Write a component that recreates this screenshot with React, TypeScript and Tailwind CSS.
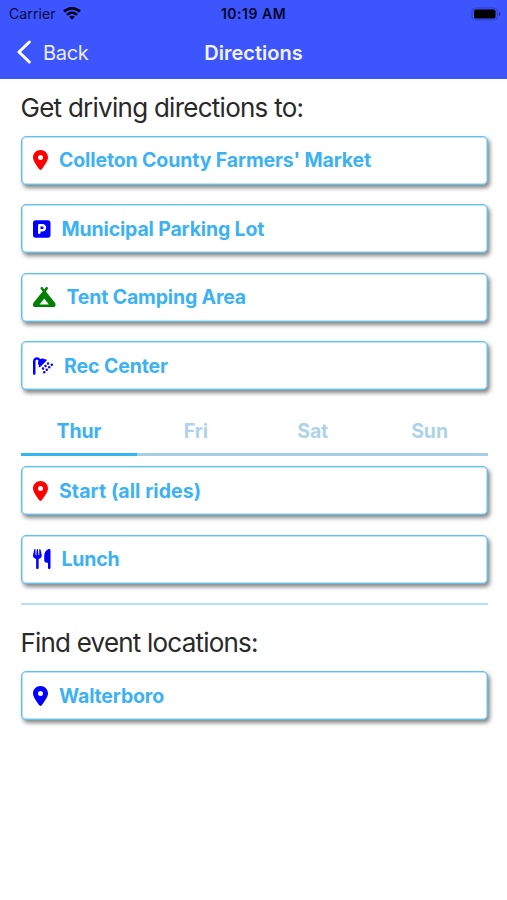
import type { ReactNode } from "react";
import {
  FaLocationDot,
  FaSquareParking,
  FaCampground,
  FaShower,
  FaUtensils,
} from "react-icons/fa6";

function Card({ icon, label, spacing }: { icon: ReactNode; label: string; spacing: string }) {
  return (
    <button className="flex h-[49px] w-full items-center gap-[11.5px] rounded-[5px] border border-[#64bfe9] bg-white pl-[11px] text-left text-[19.5px] font-bold text-[#3cb2f3] shadow-[inset_0_0_0_0.6px_#7fcdf0,2px_3px_4px_rgba(0,0,0,0.48)]">
      <span className="flex">{icon}</span>
      <span className={`pt-[1.5px] whitespace-nowrap ${spacing}`}>{label}</span>
    </button>
  );
}

function StatusBar() {
  return (
    <div className="grid h-[27px] grid-cols-3 items-center text-[14px] text-[#080b3c]">
      <div className="flex items-center gap-[7px] pl-[9px]">
        <span className="tracking-[0.1px]">Carrier</span>
        <svg width="18" height="13" viewBox="0 0 18 13" fill="none" stroke="#00001c" strokeWidth="2.6">
          <path d="M1 4.7C5.5.2 12.5.2 17 4.7" />
          <path d="M4 7.9c2.9-2.7 7.1-2.7 10 0" />
          <path d="M9 12.6 6.2 9.9c1.6-1.4 4-1.4 5.6 0Z" fill="#00001c" stroke="none" />
        </svg>
      </div>
      <span className="text-center font-semibold tracking-[0.5px] whitespace-nowrap text-[#050726]">10:19 AM</span>
      <div className="flex items-center justify-end pr-[6px]">
        <svg width="30" height="14" viewBox="0 0 30 14">
          <rect x="1" y="1" width="25.5" height="12" rx="3.5" fill="none" stroke="#2f3cc4" />
          <rect x="3" y="2.5" width="21.5" height="9" rx="1.8" fill="#000" />
          <path d="M28 5v4c2-.6 2-3.4 0-4Z" fill="#262f9c" />
        </svg>
      </div>
    </div>
  );
}

const days = ["Thur", "Fri", "Sat", "Sun"];

export default function App() {
  return (
    <div className="h-[900px] w-[507px] overflow-hidden bg-white font-['Inter','Liberation_Sans',sans-serif]">
      <header className="h-[79px] bg-[#3c55fd]">
        <StatusBar />
        <div className="grid h-[50px] grid-cols-3 items-center">
          <button className="flex items-center gap-[11px] pl-[16px] text-[20px] text-[#e9edff]">
            <svg width="16" height="24" viewBox="0 0 16 24" fill="none" stroke="#fff" strokeWidth="3" strokeLinecap="round" strokeLinejoin="round">
              <path d="M13.3 2 3 12l10.3 10" />
            </svg>
            <span className="pt-[1px] tracking-[-0.3px]">Back</span>
          </button>
          <h1 className="pt-[1px] text-center text-[20px] font-semibold text-[#f1f3ff]">Directions</h1>
        </div>
      </header>
      <main className="pr-[19px] pl-[20.5px]">
        <h2 className="flex h-[56.5px] items-center text-[26px] tracking-[-0.74px] whitespace-nowrap text-[#292929]">
          Get driving directions to:
        </h2>
        <div className="flex flex-col gap-[19.5px]">
          <Card icon={<FaLocationDot className="h-[20px] w-[15px] overflow-visible" color="#ff0000" />} label="Colleton County Farmers' Market" spacing="tracking-[-0.13px]" />
          <Card icon={<FaSquareParking className="h-[20px] w-[17.5px] overflow-visible" color="#0000ff" />} label="Municipal Parking Lot" spacing="tracking-[-0.15px]" />
          <Card icon={<FaCampground className="h-[20px] w-[22.5px] overflow-visible" color="#008000" />} label="Tent Camping Area" spacing="tracking-[-0.17px]" />
          <Card icon={<FaShower className="h-[20px] w-[20px] overflow-visible" color="#0000ff" />} label="Rec Center" spacing="tracking-[-0.1px]" />
        </div>
        <nav className="mt-[16px] grid h-[49.5px] grid-cols-4">
          {days.map((day, i) => (
            <button
              key={day}
              className={`border-b-[3px] pt-[4px] text-[19.5px] font-bold tracking-[-0.1px] ${
                i === 0 ? "border-[#35b4f2] text-[#3cb2f3]" : "border-[#a5cfe4] text-[#add3e7]"
              }`}
            >
              {day}
            </button>
          ))}
        </nav>
        <div className="mt-[10.5px] flex flex-col gap-[19.5px]">
          <Card icon={<FaLocationDot className="h-[20px] w-[15px] overflow-visible" color="#ff0000" />} label="Start (all rides)" spacing="tracking-[0.08px]" />
          <Card icon={<FaUtensils className="h-[20px] w-[17.5px] overflow-visible" color="#0000ff" />} label="Lunch" spacing="tracking-[-0.2px]" />
        </div>
        <hr className="mt-[19.5px] border-t-2 border-[#b4e1f6]" />
        <h2 className="mt-[9px] flex h-[57px] items-center text-[26px] tracking-[-0.8px] whitespace-nowrap text-[#292929]">
          Find event locations:
        </h2>
        <Card icon={<FaLocationDot className="h-[20px] w-[15px] overflow-visible" color="#0000ff" />} label="Walterboro" spacing="tracking-[-0.15px]" />
      </main>
    </div>
  );
}
